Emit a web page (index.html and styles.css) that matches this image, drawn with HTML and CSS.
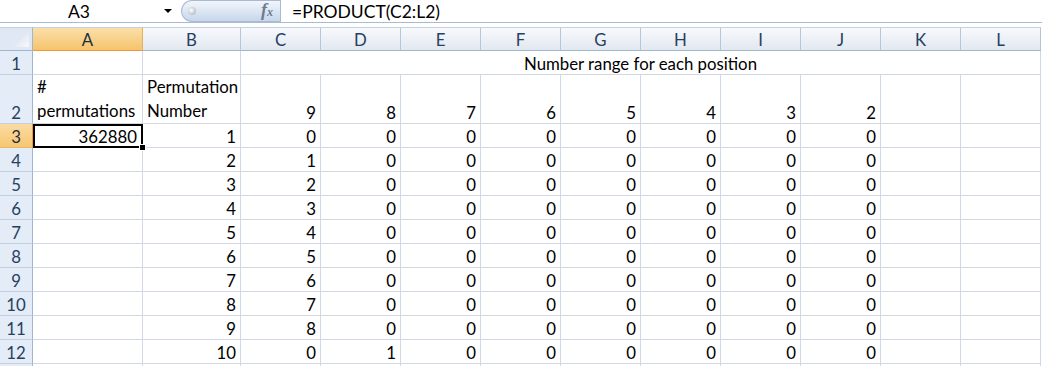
FILE: index.html
```html
<!DOCTYPE html>
<html>
<head>
<meta charset="utf-8">
<link rel="stylesheet" href="styles.css">
</head>
<body>
<div class="fbar">
  <div class="namebox">A3</div>
  <div class="ddarrow"></div>
  <div class="pill"><span class="dimple"></span><span class="fx">f<span class="fxx">x</span></span></div>
  <div class="formula">=PRODUCT(C2:L2)</div>
</div>
<div class="gap"></div>
<div class="sheet">
  <div class="corner"><svg width="16" height="16" viewBox="0 0 16 16"><defs><linearGradient id="tg" x1="0" y1="0" x2="1" y2="1"><stop offset="0" stop-color="#d3dce8"/><stop offset="1" stop-color="#f7f9fc"/></linearGradient></defs><polygon points="16,0 16,16 0,16" fill="url(#tg)"/></svg></div>
  <div class="ch hs">A</div><div class="ch">B</div><div class="ch">C</div><div class="ch">D</div><div class="ch">E</div><div class="ch">F</div><div class="ch">G</div><div class="ch">H</div><div class="ch">I</div><div class="ch">J</div><div class="ch">K</div><div class="ch">L</div>

  <div class="rh">1</div><div class="c"></div><div class="c"></div><div class="c merged">Number range for each position</div>

  <div class="rh">2</div><div class="c wrap"><span>#<br>permutations</span></div><div class="c wrap"><span>Permutation<br>Number</span></div><div class="c r">9</div><div class="c r">8</div><div class="c r">7</div><div class="c r">6</div><div class="c r">5</div><div class="c r">4</div><div class="c r">3</div><div class="c r">2</div><div class="c"></div><div class="c"></div>

  <div class="rh rs">3</div><div class="c r sel">362880</div><div class="c r">1</div><div class="c r">0</div><div class="c r">0</div><div class="c r">0</div><div class="c r">0</div><div class="c r">0</div><div class="c r">0</div><div class="c r">0</div><div class="c r">0</div><div class="c"></div><div class="c"></div>

  <div class="rh">4</div><div class="c"></div><div class="c r">2</div><div class="c r">1</div><div class="c r">0</div><div class="c r">0</div><div class="c r">0</div><div class="c r">0</div><div class="c r">0</div><div class="c r">0</div><div class="c r">0</div><div class="c"></div><div class="c"></div>

  <div class="rh">5</div><div class="c"></div><div class="c r">3</div><div class="c r">2</div><div class="c r">0</div><div class="c r">0</div><div class="c r">0</div><div class="c r">0</div><div class="c r">0</div><div class="c r">0</div><div class="c r">0</div><div class="c"></div><div class="c"></div>

  <div class="rh">6</div><div class="c"></div><div class="c r">4</div><div class="c r">3</div><div class="c r">0</div><div class="c r">0</div><div class="c r">0</div><div class="c r">0</div><div class="c r">0</div><div class="c r">0</div><div class="c r">0</div><div class="c"></div><div class="c"></div>

  <div class="rh">7</div><div class="c"></div><div class="c r">5</div><div class="c r">4</div><div class="c r">0</div><div class="c r">0</div><div class="c r">0</div><div class="c r">0</div><div class="c r">0</div><div class="c r">0</div><div class="c r">0</div><div class="c"></div><div class="c"></div>

  <div class="rh">8</div><div class="c"></div><div class="c r">6</div><div class="c r">5</div><div class="c r">0</div><div class="c r">0</div><div class="c r">0</div><div class="c r">0</div><div class="c r">0</div><div class="c r">0</div><div class="c r">0</div><div class="c"></div><div class="c"></div>

  <div class="rh">9</div><div class="c"></div><div class="c r">7</div><div class="c r">6</div><div class="c r">0</div><div class="c r">0</div><div class="c r">0</div><div class="c r">0</div><div class="c r">0</div><div class="c r">0</div><div class="c r">0</div><div class="c"></div><div class="c"></div>

  <div class="rh">10</div><div class="c"></div><div class="c r">8</div><div class="c r">7</div><div class="c r">0</div><div class="c r">0</div><div class="c r">0</div><div class="c r">0</div><div class="c r">0</div><div class="c r">0</div><div class="c r">0</div><div class="c"></div><div class="c"></div>

  <div class="rh">11</div><div class="c"></div><div class="c r">9</div><div class="c r">8</div><div class="c r">0</div><div class="c r">0</div><div class="c r">0</div><div class="c r">0</div><div class="c r">0</div><div class="c r">0</div><div class="c r">0</div><div class="c"></div><div class="c"></div>

  <div class="rh">12</div><div class="c"></div><div class="c r">10</div><div class="c r">0</div><div class="c r">1</div><div class="c r">0</div><div class="c r">0</div><div class="c r">0</div><div class="c r">0</div><div class="c r">0</div><div class="c r">0</div><div class="c"></div><div class="c"></div>

  <div class="rh"></div><div class="c"></div><div class="c"></div><div class="c"></div><div class="c"></div><div class="c"></div><div class="c"></div><div class="c"></div><div class="c"></div><div class="c"></div><div class="c"></div><div class="c"></div><div class="c"></div>
</div>
</body>
</html>
```
FILE: styles.css
```css
html, body {
  margin: 0;
  padding: 0;
  background: #fff;
  overflow: hidden;
}
body {
  width: 1042px;
  height: 366px;
  font-family: Lato, "Liberation Sans", sans-serif;
  color: #000;
}
.fbar {
  display: flex;
  height: 22px;
  border-bottom: 1px solid #a9bbd1;
}
.namebox {
  width: 158px;
  display: flex;
  align-items: center;
  justify-content: center;
  font-size: 17.5px;
}
.ddarrow {
  width: 20px;
  display: flex;
  align-items: center;
  justify-content: center;
}
.ddarrow::before {
  content: '';
  border-left: 4px solid transparent;
  border-right: 4px solid transparent;
  border-top: 4px solid #000;
}
.pill {
  margin-left: 3px;
  width: 99px;
  box-sizing: border-box;
  border: 1px solid #a7bbd5;
  border-right: none;
  border-radius: 11px 0 0 11px;
  background: linear-gradient(#f2f6fb, #dce6f3 50%, #c8d7eb);
  display: flex;
  align-items: center;
  justify-content: space-between;
  padding: 0 7px 0 6px;
}
.dimple {
  width: 8px;
  height: 8px;
  border-radius: 50%;
  background: radial-gradient(circle at 40% 40%, #ffffff, #9ea6b2);
}
.fx {
  font-family: "Liberation Serif", serif;
  font-style: italic;
  font-weight: bold;
  color: #6e7c8f;
  font-size: 18px;
  line-height: 18px;
}
.fxx {
  font-size: 12px;
}
.formula {
  flex: 1;
  border-left: 1px solid #a7bbd5;
  padding-left: 11px;
  display: flex;
  align-items: center;
  font-size: 17.5px;
}
.gap {
  height: 4px;
}
.sheet {
  display: grid;
  grid-template-columns: 33px 110px 98px repeat(10, 80px);
  grid-template-rows: 24px 24px 49px repeat(11, 24px);
  font-size: 16.8px;
}
.corner {
  box-sizing: border-box;
  border-top: 1px solid #c4d1e2;
  border-right: 1px solid #9eb6ce;
  border-bottom: 1px solid #9eb6ce;
  background: #dfe8f4;
  display: flex;
  align-items: flex-end;
  justify-content: flex-end;
  padding: 0 3px 3px 0;
}
.ch {
  box-sizing: border-box;
  border-top: 1px solid #c4d1e2;
  border-right: 1px solid #b5c5da;
  border-bottom: 1px solid #9eb6ce;
  background: linear-gradient(#f7f9fc, #e2e8f1);
  display: flex;
  align-items: center;
  justify-content: center;
  color: #27405f;
}
.ch.hs {
  background: linear-gradient(#fbdfa9, #f5c46c);
  border-bottom-color: #f29536;
  border-right-color: #e4b25e;
  color: #1d2c40;
}
.rh {
  box-sizing: border-box;
  background: #e4ecf7;
  border-right: 1px solid #9eb6ce;
  border-bottom: 1px solid #c3d0e2;
  display: flex;
  align-items: flex-end;
  justify-content: center;
  color: #27405f;
  line-height: 20px;
}
.rh.rs {
  background: linear-gradient(#fbdba2, #f7c771);
  border-right-color: #f29536;
  border-bottom-color: #e9b768;
  color: #1d2c40;
}
.c {
  box-sizing: border-box;
  border-right: 1px solid #d0d7e5;
  border-bottom: 1px solid #d0d7e5;
  display: flex;
  align-items: flex-end;
  padding: 0 4px;
  line-height: 20px;
  white-space: nowrap;
}
.c.r {
  justify-content: flex-end;
}
.c.wrap {
  line-height: 24px;
}
.c.merged {
  grid-column: span 10;
  justify-content: center;
}
.c.sel {
  position: relative;
  z-index: 2;
  padding-right: 5px;
}
.c.sel::before {
  content: '';
  position: absolute;
  left: 0;
  top: 0;
  right: -1px;
  bottom: -1px;
  border: 2px solid #000;
}
.c.sel::after {
  content: '';
  position: absolute;
  right: -4px;
  bottom: -4px;
  width: 5px;
  height: 5px;
  background: #000;
  border: 1px solid #fff;
}
```
